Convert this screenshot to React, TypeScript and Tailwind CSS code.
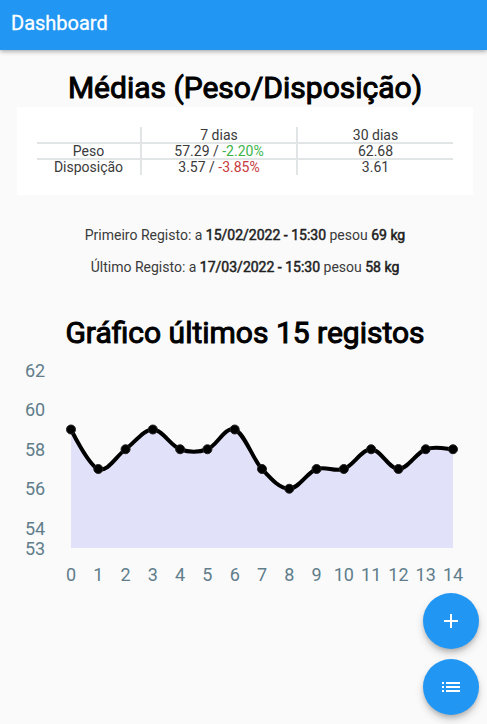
import { MdAdd, MdList } from "react-icons/md";

const weights = [59, 57, 58, 59, 58, 58, 59, 57, 56, 57, 57, 58, 57, 58, 58];
const ticks = [62, 60, 58, 56, 54, 53];

const LEFT = 54;
const RIGHT = 436;
const BOTTOM = 192;
const UNIT = 19.75;
const SMOOTHNESS = 0.35;

const xOf = (i: number) => LEFT + ((RIGHT - LEFT) * i) / (weights.length - 1);
const yOf = (v: number) => BOTTOM - (v - 53) * UNIT;

function curve(values: number[]) {
  const pts = values.map((v, i) => [xOf(i), yOf(v)]);
  let d = `M${pts[0][0]} ${pts[0][1]}`;
  let tx = 0;
  let ty = 0;
  for (let i = 1; i < pts.length; i++) {
    const prev = pts[i - 1];
    const cur = pts[i];
    const next = pts[i + 1] ?? cur;
    const c1 = [prev[0] + tx, prev[1] + ty];
    tx = ((next[0] - prev[0]) / 2) * SMOOTHNESS;
    ty = ((next[1] - prev[1]) / 2) * SMOOTHNESS;
    d += ` C${c1[0]} ${c1[1]} ${cur[0] - tx} ${cur[1] - ty} ${cur[0]} ${cur[1]}`;
  }
  return d;
}

function Title({ children }: { children: string }) {
  return (
    <h2 className="pb-px text-center text-[30px] leading-9 font-normal text-black [-webkit-text-stroke:1px_black]">
      {children}
    </h2>
  );
}

function Averages() {
  const line = "border-[#e1e5e5]";
  return (
    <div className="bg-white p-5">
      <table className="w-full table-fixed border-collapse text-center text-sm leading-[14px]">
        <colgroup>
          <col className="w-1/4" />
          <col className="w-3/8" />
          <col className="w-3/8" />
        </colgroup>
        <thead>
          <tr className="h-4">
            <td className={`border-r-2 border-b-2 p-0 ${line}`} />
            <th scope="col" className={`border-r-2 border-b-2 p-0 font-normal ${line}`}>7 dias</th>
            <th scope="col" className={`border-b-2 p-0 font-normal ${line}`}>30 dias</th>
          </tr>
        </thead>
        <tbody className="align-top">
          <tr className="h-4">
            <th scope="row" className={`border-r-2 border-b-2 p-0 font-normal ${line}`}>Peso</th>
            <td className={`border-r-2 border-b-2 p-0 ${line}`}>
              57.29 / <span className="text-[#3cb34a]">-2.20%</span>
            </td>
            <td className={`border-b-2 p-0 ${line}`}>62.68</td>
          </tr>
          <tr className="h-4">
            <th scope="row" className={`border-r-2 p-0 font-normal ${line}`}>Disposição</th>
            <td className={`border-r-2 p-0 ${line}`}>
              3.57 / <span className="text-[#c73a3a]">-3.85%</span>
            </td>
            <td className="p-0">3.61</td>
          </tr>
        </tbody>
      </table>
    </div>
  );
}

function Bold({ children }: { children: string }) {
  return <strong className="font-normal text-[#212121] [-webkit-text-stroke:0.5px_#212121]">{children}</strong>;
}

function Record({ label, date, weight }: { label: string; date: string; weight: string }) {
  return (
    <p>
      {label}: a <Bold>{date}</Bold> pesou <Bold>{weight}</Bold>
    </p>
  );
}

function Chart() {
  const d = curve(weights);
  return (
    <svg viewBox="0 0 456 236" className="mt-1 block h-auto w-full" role="img" aria-label="Gráfico últimos 15 registos">
      <path d={`${d} L${RIGHT} ${BOTTOM} L${LEFT} ${BOTTOM} Z`} fill="#e1e1f9" />
      <path d={d} fill="none" stroke="#000" strokeWidth="4" />
      {weights.map((v, i) => (
        <circle key={i} cx={xOf(i)} cy={yOf(v)} r="4.5" fill="#000" stroke="#222" strokeWidth="1" />
      ))}
      <g className="fill-[#607d8b] text-lg">
        {ticks.map((t) => (
          <text key={t} x="18" y={Math.floor(yOf(t)) + 7} textAnchor="middle">{t}</text>
        ))}
        {weights.map((_, i) => (
          <text key={i} x={xOf(i)} y="225" textAnchor="middle">{i}</text>
        ))}
      </g>
    </svg>
  );
}

function Fab({ label, children }: { label: string; children: React.ReactNode }) {
  return (
    <button
      type="button"
      aria-label={label}
      className="flex size-14 items-center justify-center rounded-full bg-[#2196f3] text-2xl text-white shadow-[0_3px_5px_-1px_rgba(0,0,0,0.2),0_5px_8px_rgba(0,0,0,0.16)]"
    >
      {children}
    </button>
  );
}

export default function App() {
  return (
    <div className="min-h-screen bg-[#fafafa] font-[Roboto,sans-serif] text-[#3a3a3a]">
      <header className="flex h-[50px] items-center bg-[#2196f3] px-[11px] pb-1 shadow-[0_1px_5px_rgba(0,0,0,0.4)]">
        <h1 className="text-xl font-normal text-white [-webkit-text-stroke:0.3px_white]">Dashboard</h1>
      </header>
      <main className="pt-5 pr-3.5 pl-[17px]">
        <Title>Médias (Peso/Disposição)</Title>
        <Averages />
        <div className="flex flex-col gap-4 py-8 text-center text-sm leading-4">
          <Record label="Primeiro Registo" date="15/02/2022 - 15:30" weight="69 kg" />
          <Record label="Último Registo" date="17/03/2022 - 15:30" weight="58 kg" />
        </div>
        <div className="pt-2">
          <Title>Gráfico últimos 15 registos</Title>
        </div>
        <Chart />
      </main>
      <div className="fixed right-2 bottom-[9px] flex flex-col gap-2.5">
        <Fab label="Adicionar registo"><MdAdd /></Fab>
        <Fab label="Ver registos"><MdList /></Fab>
      </div>
    </div>
  );
}
